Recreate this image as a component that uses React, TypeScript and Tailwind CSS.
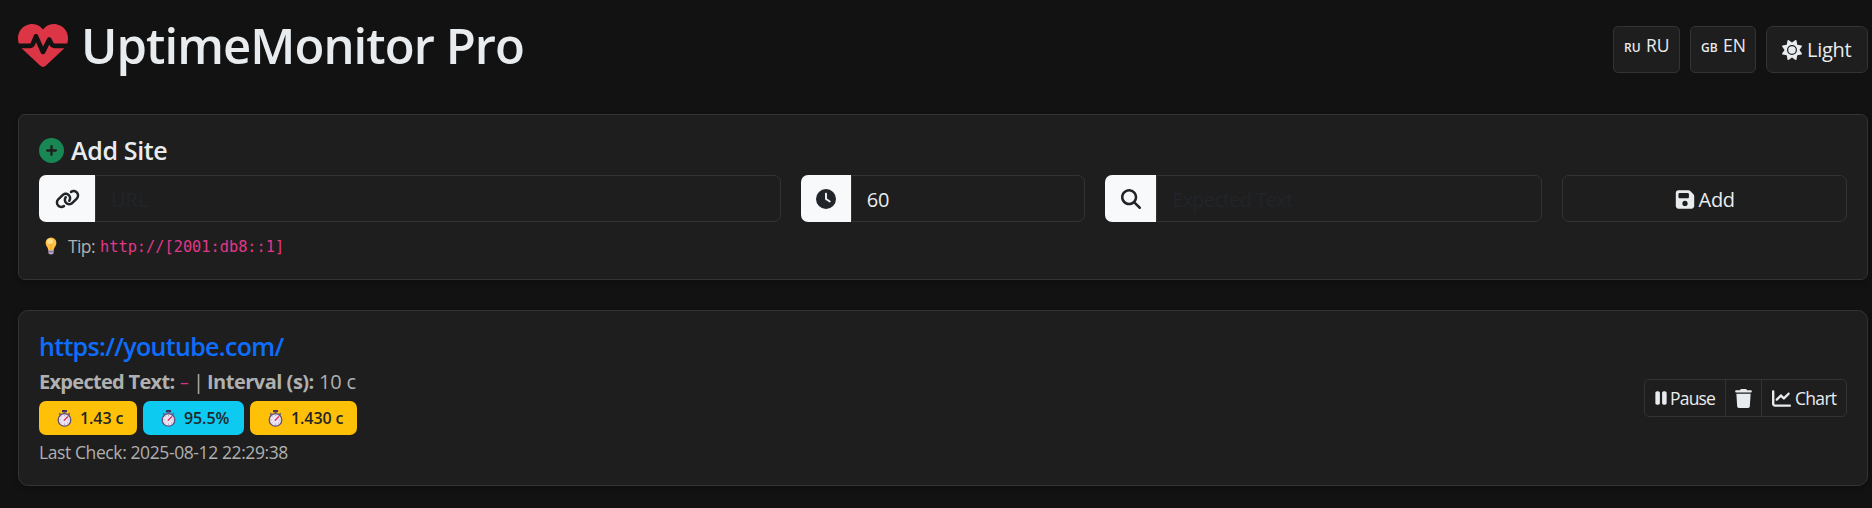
import type { ReactNode } from "react";
import {
  FaChartLine,
  FaCirclePlus,
  FaClock,
  FaFloppyDisk,
  FaHeartPulse,
  FaLink,
  FaMagnifyingGlass,
  FaPause,
  FaSun,
  FaTrash,
} from "react-icons/fa6";

function Bulb() {
  return (
    <svg viewBox="0 0 12 18" className="h-[18px] w-[12px] shrink-0">
      <path d="M6 .5A5.4 5.4 0 0 0 .6 5.9C.6 8.8 2.9 9.9 3.3 13h5.4c.4-3.1 2.7-4.2 2.7-7.100A5.400 5.400 0 0 0 6 .5Z" fill="#ffc13f" />
      <ellipse cx="5" cy="4.500" rx="3" ry="2.800" fill="#ffe08a" />
      <path d="M4.300 7 6 8.500 7.700 7M6 8.500V13" stroke="#f39a2d" strokeWidth=".8" fill="none" />
      <path d="M3.300 13h5.400v2.600c0 1.100-.8 1.900-2.700 1.900s-2.700-.8-2.700-1.900Z" fill="#b9a8c4" />
      <path d="M3.300 14.800h5.400" stroke="#6d5a7d" strokeWidth=".8" />
    </svg>
  );
}

function Stopwatch() {
  return (
    <svg viewBox="0 0 15 17" className="h-[17px] w-[15px] shrink-0">
      <rect x="5" y="0" width="5" height="2.200" rx=".6" fill="#3b2b55" />
      <rect x="6.600" y="1.500" width="1.800" height="2.500" fill="#6d5a86" />
      <path d="m1.600 3.800 1.200-1 1.400 1.300-1.300 1.200ZM13.400 3.800l-1.200-1-1.400 1.300 1.300 1.200Z" fill="#6d5a86" />
      <circle cx="7.500" cy="9.900" r="6.300" fill="#ece3f3" stroke="#5f4f7a" strokeWidth="1.300" />
      <path d="M7.500 5v1.200M7.500 13.600v1.200M2.600 9.900h1.200M11.200 9.900h1.200M4 6.400l.8.8M4 13.400l.8-.8M11 13.400l-.8-.8" stroke="#9a8cab" strokeWidth=".7" />
      <path d="m7.200 10.200 3.500-3.500" stroke="#e0315b" strokeWidth="1.300" strokeLinecap="round" />
    </svg>
  );
}

function LangButton({ flag, label, width }: { flag: string; label: string; width: string }) {
  return (
    <button className={`flex h-[47px] items-start rounded-[5px] border border-[#333] bg-[#1e1e1e] pt-[5px] pl-[10px] text-[17.5px] leading-[26px] ${width}`}>
      <span className="w-[22px] pt-[3px] text-left text-[12px] font-semibold">{flag}</span>
      <span>{label}</span>
    </button>
  );
}

function Field({ icon, addon, span, children }: { icon: ReactNode; addon: string; span: string; children: ReactNode }) {
  return (
    <div className={`flex h-[47px] ${span}`}>
      <span className={`flex shrink-0 items-center justify-center rounded-l-[7px] bg-[#f8f9fa] text-[20px] text-[#212529] ${addon}`}>{icon}</span>
      <div className="flex flex-1 items-center rounded-r-[7px] border border-[#333] pl-[15px] pt-[2px] text-[20px] leading-[30px]">{children}</div>
    </div>
  );
}

function Badge({ color, width, children }: { color: string; width: string; children: ReactNode }) {
  return (
    <span className={`flex h-[34px] items-center rounded-[7px] pl-[18px] text-[16px] font-semibold text-[#212529] ${color} ${width}`}>
      <Stopwatch />
      <span className="ml-[8px] whitespace-nowrap tracking-[-0.100px]">{children}</span>
    </span>
  );
}

export default function App() {
  return (
    <div className="h-[508px] overflow-hidden bg-[#121212] pt-[15px] pr-[4px] pl-[18px] font-['Open_Sans','Noto_Sans',sans-serif] text-[#e9ecef]">
      <header className="flex h-[60px] items-start justify-between">
        <h1 className="flex h-[60px] items-center text-[49px] leading-[60px] font-semibold tracking-[-0.950px]">
          <FaHeartPulse className="mr-[13px] h-[50px] w-[50px] text-[#dc3545]" />
          UptimeMonitor Pro
        </h1>
        <div className="mt-[11px] flex gap-[10px]">
          <LangButton flag="RU" label="RU" width="w-[67px]" />
          <LangButton flag="GB" label="EN" width="w-[66px]" />
          <button className="flex h-[47px] w-[102px] items-center rounded-[7px] border border-[#333] bg-[#1e1e1e] pl-[15px] text-[20px] tracking-[-0.300px]">
            <FaSun className="mr-[5px] h-[20px] w-[20px]" />
            Light
          </button>
        </div>
      </header>

      <section className="mt-[39px] h-[166px] rounded-[7px] border border-[#333] bg-[#1e1e1e] px-[20px] pt-[20px] shadow-[0_3px_6px_rgba(0,0,0,0.2)]">
        <h2 className="mb-[10px] flex h-[30px] items-center text-[25px] leading-[30px] font-semibold tracking-[-0.350px]">
          <FaCirclePlus className="mr-[7px] h-[25px] w-[25px] text-[#198754]" />
          Add Site
        </h2>
        <div className="grid grid-cols-12 gap-[20px]">
          <Field span="col-span-5" addon="w-[56px]" icon={<FaLink className="h-[20px] w-[25px]" />}>
            <span className="text-[#212529]">URL</span>
          </Field>
          <Field span="col-span-2" addon="w-[50px]" icon={<FaClock />}>
            <span>60</span>
          </Field>
          <Field span="col-span-3" addon="w-[51px]" icon={<FaMagnifyingGlass />}>
            <span className="tracking-[-0.800px] text-[#212529]">Expected Text</span>
          </Field>
          <button className="col-span-2 flex h-[47px] items-center justify-center gap-[4px] rounded-[7px] border border-[#333] pt-[2px] text-[20px] tracking-[-0.300px]">
            <FaFloppyDisk className="h-[21px] w-[20px]" />
            Add
          </button>
        </div>
        <p className="mt-[11px] flex h-[26px] items-center pl-[6px] text-[17.500px] leading-[26px] text-[#b0b0b0]">
          <Bulb />
          <span className="ml-[11px] w-[32px] tracking-[-0.600px]">Tip:</span>
          <code className="pt-[1px] font-['DejaVu_Sans_Mono','Liberation_Mono',monospace] text-[15.300px] text-[#e0388b]">http://[2001:db8::1]</code>
        </p>
      </section>

      <section className="mt-[30px] flex h-[176px] items-center justify-between rounded-[10px] border border-[#333] bg-[#1e1e1e] px-[20px] shadow-[0_3px_6px_rgba(0,0,0,0.2)]">
        <div className="flex h-[134px] flex-col whitespace-nowrap text-[#b0b0b0]">
          <a href="#" className="h-[30px] text-[25px] leading-[30px] font-semibold tracking-[-0.680px] text-[#0d6efd]">https://youtube.com/</a>
          <p className="mt-[6px] flex h-[30px] text-[20px] leading-[30px]">
            <b className="w-[141px] tracking-[-0.700px]">Expected Text:</b>
            <code className="w-[15px] font-['Open_Sans','Noto_Sans',sans-serif] text-[17.500px] text-[#d63384]">–</code>
            <span className="w-[12px] -translate-x-[2px]">|</span>
            <b className="w-[112px] tracking-[-0.500px]">Interval (s):</b>
            <span className="tracking-[-0.200px]">10 c</span>
          </p>
          <div className="mt-[4px] flex gap-[6px]">
            <Badge color="bg-[#ffc107]" width="w-[98px]">1.43 c</Badge>
            <Badge color="bg-[#0dcaf0]" width="w-[101px]">95.5%</Badge>
            <Badge color="bg-[#ffc107]" width="w-[107px]">1.430 c</Badge>
          </div>
          <p className="mt-[4px] text-[17.500px] leading-[26px] tracking-[-0.400px]">Last Check: 2025-08-12 22:29:38</p>
        </div>
        <div className="flex h-[38px] items-stretch rounded-[5px] border border-[#333] text-[17.500px] leading-[26px]">
          <button className="flex w-[81px] items-center border-r border-[#333] pl-[9px] tracking-[-0.800px]">
            <FaPause className="mr-[2px] h-[18px] w-[14px]" />
            Pause
          </button>
          <button className="flex w-[36px] items-center justify-center border-r border-[#333]">
            <FaTrash className="h-[19px] w-[17px]" />
          </button>
          <button className="flex w-[84px] items-center pl-[10px] tracking-[-0.700px]">
            <FaChartLine className="mr-[4px] h-[19px] w-[19px]" />
            Chart
          </button>
        </div>
      </section>
    </div>
  );
}
